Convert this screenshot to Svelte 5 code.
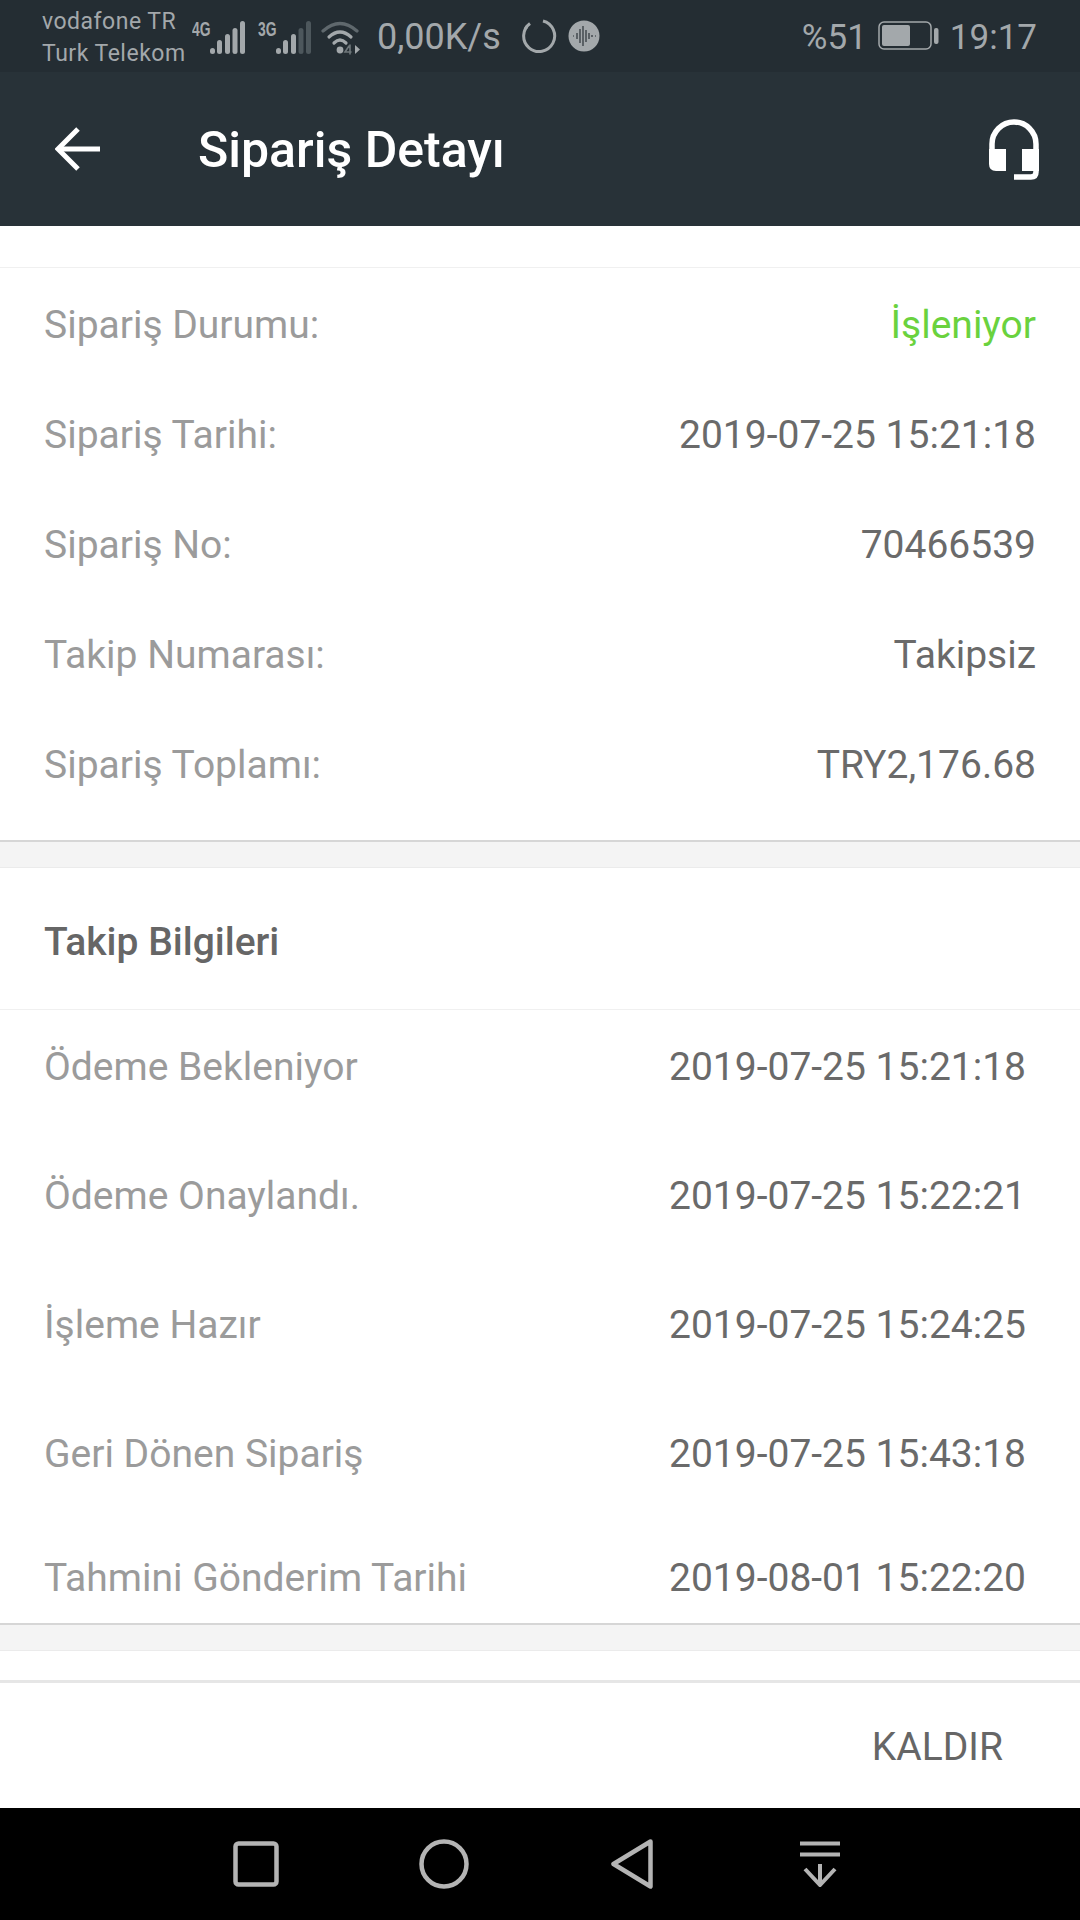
<script>
  const summary = [
    { label: 'Sipariş Durumu:', value: 'İşleniyor', accent: true },
    { label: 'Sipariş Tarihi:', value: '2019-07-25 15:21:18' },
    { label: 'Sipariş No:', value: '70466539' },
    { label: 'Takip Numarası:', value: 'Takipsiz' },
    { label: 'Sipariş Toplamı:', value: 'TRY2,176.68' },
  ];
  const tracking = [
    { label: 'Ödeme Bekleniyor', value: '2019-07-25 15:21:18' },
    { label: 'Ödeme Onaylandı.', value: '2019-07-25 15:22:21' },
    { label: 'İşleme Hazır', value: '2019-07-25 15:24:25' },
    { label: 'Geri Dönen Sipariş', value: '2019-07-25 15:43:18' },
    { label: 'Tahmini Gönderim Tarihi', value: '2019-08-01 15:22:20' },
  ];
</script>

<div class="screen">
  <div class="status">
    <div class="carriers"><span>vodafone TR</span><span>Turk Telekom</span></div>
    <div class="net">
      <span class="gen">4G</span>
      <svg width="35" height="34" viewBox="0 0 35 34" fill="#a3a8ab">
        <rect x="0" y="27" width="5" height="6" rx="2.5" /><rect x="7" y="19" width="5" height="14" rx="2.5" /><rect x="15" y="13" width="5" height="20" rx="2.5" /><rect x="22.5" y="7" width="5" height="26" rx="2.5" /><rect x="30" y="0" width="5" height="33" rx="2.5" />
      </svg>
    </div>
    <div class="net second">
      <span class="gen">3G</span>
      <svg width="35" height="34" viewBox="0 0 35 34" fill="#a3a8ab">
        <rect x="0" y="27" width="5" height="6" rx="2.5" /><rect x="7" y="19" width="5" height="14" rx="2.5" /><rect x="15" y="13" width="5" height="20" rx="2.5" /><rect x="22.5" y="7" width="5" height="26" rx="2.5" fill="#4d575c" /><rect x="30" y="0" width="5" height="33" rx="2.5" fill="#4d575c" />
      </svg>
    </div>
    <svg class="wifi" width="40" height="34" viewBox="0 0 40 34" fill="none" stroke-linecap="round">
      <path d="M2 10 Q19 -5 36 10" stroke="#5f686d" stroke-width="3.2" />
      <path d="M8 16 Q19 6 30 16" stroke="#a3a8ab" stroke-width="3.2" />
      <path d="M13 22 Q19 16 25 22" stroke="#a3a8ab" stroke-width="3.2" />
      <circle cx="19" cy="29" r="3.4" fill="#a3a8ab" />
      <path d="M34 24 L39 28.5 L34 33 Z" fill="#a3a8ab" />
      <path d="M28 25 L24 31 H30 M29 24 V33" stroke="#6f777b" stroke-width="1.6" />
    </svg>
    <span class="speed">0,00K/s</span>
    <svg class="ring" width="36" height="36" viewBox="0 0 36 36" fill="none" stroke="#a3a8ab" stroke-width="3">
      <path d="M22 3 A15.5 15.5 0 1 1 9 5.5" />
      <path d="M6 8.5 L4.5 10.5" />
    </svg>
    <svg class="sound" width="32" height="32" viewBox="0 0 32 32">
      <circle cx="16" cy="16" r="15.5" fill="#a3a8ab" />
      <path d="M5 16h1M9 13v6M12 9v14M15 6v20M18 10v12M21 13v6M24 15v2M27 16h1" stroke="#2b3238" stroke-width="1.2" />
    </svg>
    <span class="grow"></span>
    <span class="level">%51</span>
    <svg class="battery" width="61" height="30" viewBox="0 0 61 30" fill="none">
      <rect x="1" y="1" width="52" height="27" rx="5" stroke="#a3a8ab" stroke-width="1.5" />
      <rect x="4" y="4" width="28" height="21" rx="2" fill="#a3a8ab" />
      <rect x="56" y="7" width="4.5" height="16" rx="2" fill="#a3a8ab" />
    </svg>
    <span class="clock">19:17</span>
  </div>

  <header>
    <svg class="back" width="46" height="44" viewBox="0 0 46 44" fill="none" stroke="#fff" stroke-width="5">
      <path d="M45 22H4" /><path d="M23 2 3 22l20 20" />
    </svg>
    <h1>Sipariş Detayı</h1>
    <svg class="support" width="50" height="61" viewBox="0 0 50 61" fill="none">
      <path d="M3 38V25a22 22 0 0 1 44 0v28q0 5-5 5H25" stroke="#fff" stroke-width="5.5" />
      <path d="M0 30h17v22H7q-7 0-7-7zM33 30h17v22H33z" fill="#fff" />
    </svg>
  </header>

  <main>
    <section class="summary">
      {#each summary as row}
        <div class="row">
          <span class="label">{row.label}</span>
          <span class="value" class:accent={row.accent}>{row.value}</span>
        </div>
      {/each}
    </section>
    <div class="gap"></div>
    <section class="tracking">
      <h2>Takip Bilgileri</h2>
      <div class="list">
        {#each tracking as row}
          <div class="row">
            <span class="label">{row.label}</span>
            <span class="value">{row.value}</span>
          </div>
        {/each}
      </div>
    </section>
    <div class="gap"></div>
    <div class="peek"></div>
  </main>

  <div class="actions"><span>KALDIR</span></div>

  <nav>
    <svg width="46" height="46" viewBox="0 0 46 46" fill="none" stroke="#b4b4b4" stroke-width="4.5">
      <rect x="2.5" y="2.5" width="41" height="41" rx="3" />
    </svg>
    <svg width="50" height="50" viewBox="0 0 50 50" fill="none" stroke="#b4b4b4" stroke-width="4.5">
      <circle cx="25" cy="25" r="22.5" />
    </svg>
    <svg width="42" height="50" viewBox="0 0 42 50" fill="none" stroke="#b4b4b4" stroke-width="4.5" stroke-linejoin="round">
      <path d="M39.5 2.5 2.5 25l37 22.5z" />
    </svg>
    <svg width="40" height="46" viewBox="0 0 40 46" fill="none" stroke="#b4b4b4" stroke-width="4">
      <path d="M0 2.5h40M0 13.5h40" />
      <path d="M20 23v21" />
      <path d="M5 28l15 16 15-16" />
    </svg>
  </nav>
</div>

<style>
  :global(body) { margin: 0; background: #fff; }
  .screen { width: 1080px; height: 1920px; display: flex; flex-direction: column; overflow: hidden; font-family: Roboto, sans-serif; background: #fff; }

  .status { height: 72px; flex: none; box-sizing: border-box; padding-left: 42px; display: flex; align-items: center; background: #242d33; color: #a3a8ab; }
  .carriers { width: 150px; margin-top: 3px; display: flex; flex-direction: column; font-size: 23px; line-height: 32px; letter-spacing: .5px; white-space: nowrap; }
  .net { display: flex; align-items: flex-start; height: 34px; margin-top: 3px; }
  .net.second { margin-left: 13px; }
  .gen { width: 18px; display: inline-block; font: 700 21px/16px "Liberation Sans", sans-serif; transform: scaleX(.66); transform-origin: left; }
  .wifi { margin-left: 10px; margin-top: 3px; }
  .speed { margin-left: 16px; margin-top: 2px; font-size: 36px; }
  .ring { margin-left: 20px; }
  .sound { margin-left: 11px; }
  .grow { flex: 1; }
  .level, .clock { margin-top: 2px; font-size: 35px; }
  .battery { margin-left: 11px; margin-right: 11px; }
  .clock { margin-right: 43px; }

  header { height: 154px; flex: none; display: flex; align-items: center; padding: 0 41px 0 55px; background: #283238; }
  .back { flex: none; }
  h1 { flex: 1; margin: 2px 0 0 97px; color: #fff; font-size: 50px; font-weight: 500; }

  main { flex: 1; display: flex; flex-direction: column; min-height: 0; }
  .summary { margin-top: 41px; border-top: 1px solid #f0f0f0; padding-top: 2px; border-bottom: 2px solid #d6d6d6; padding-bottom: 20px; }
  .row { display: flex; justify-content: space-between; align-items: center; white-space: nowrap; font-size: 39px; }
  .summary .row { height: 110px; padding: 0 44px; }
  .label { color: #9b9b9b; }
  .value { color: #6a6a6a; }
  .accent { color: #6ad23e; }
  .gap { height: 25px; background: #f4f4f4; border-bottom: 1px solid #ebebeb; flex: none; }
  h2 { margin: 0; height: 142px; box-sizing: border-box; padding: 6px 44px 0; display: flex; align-items: center; border-bottom: 1px solid #f0f0f0; font-size: 39px; font-weight: 500; color: #666; }
  .tracking { border-bottom: 2px solid #d6d6d6; }
  .list { display: flex; flex-direction: column; padding: 0 54px 0 44px; }
  .tracking .row { height: 129px; box-sizing: border-box; padding-top: 34px; align-items: flex-start; line-height: 46px; }
  .tracking .row:last-child { height: 97px; padding-top: 29px; }
  .peek { flex: 1; }

  .actions { height: 128px; flex: none; box-sizing: border-box; border-top: 3px solid #e6e6e6; padding: 2px 77px 0 0; display: flex; align-items: center; justify-content: flex-end; font-size: 39px; color: #666; }
  nav { height: 112px; flex: none; background: #000; display: grid; grid-template-columns: repeat(4, 188px); align-items: center; justify-items: center; padding-left: 162px; }
</style>
